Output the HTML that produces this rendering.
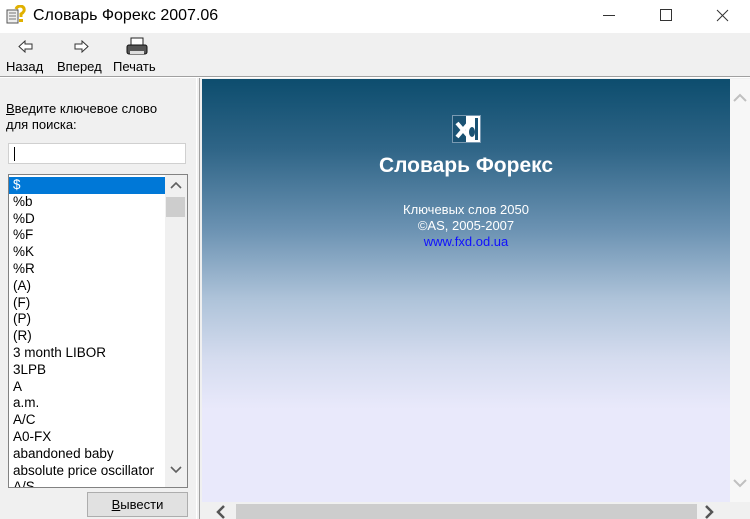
<!DOCTYPE html>
<html><head><meta charset="utf-8"><style>
*{margin:0;padding:0;box-sizing:border-box}
body{width:750px;height:519px;overflow:hidden;background:#f0f0f0;font-family:"Liberation Sans","DejaVu Sans",sans-serif;position:relative;font-size:13px;color:#000}
.abs{position:absolute}
#title{left:0;top:0;width:750px;height:33px;background:#fff}
#title .t{left:33px;top:7px;font-size:16px;color:#000}
.tb{font-size:13px;color:#000}
#list div{height:16.8px;line-height:16.8px;padding-left:4px;font-size:13.5px;white-space:nowrap}
#content{left:202px;top:79px;width:528px;height:423px;background:linear-gradient(#0d4d6e 0px,#2f6587 70px,#6b92b2 150px,#aec3d9 220px,#d5dcef 280px,#e9e9fb 330px,#e9e9fb 423px)}
</style></head><body>
<div id="title" class="abs">
<svg class="abs" style="left:6px;top:5px" width="20" height="20" viewBox="0 0 20 20"><rect x="1" y="5" width="11" height="13" fill="#eee" stroke="#555"/><path d="M3 8h7M3 11h7M3 14h7" stroke="#777"/><path d="M10 4 Q11 1 15 1 Q19 2 18 6 Q17 8 15 9 L15 12" stroke="#e0b000" stroke-width="3" fill="none"/><rect x="13" y="14" width="4" height="3" fill="#e0b000"/></svg>
<div class="abs t">Словарь Форекс 2007.06</div>
<svg class="abs" style="left:600px;top:0" width="150" height="33"><path d="M3 15.5h12" stroke="#333"/><rect x="60.5" y="9.5" width="11" height="11" fill="none" stroke="#333"/><path d="M117 10l11 11M128 10l-11 11" stroke="#333"/></svg>
</div>
<svg class="abs" style="left:18px;top:40px" width="16" height="13"><path d="M1 6.5L7 1V4H14V9H7V12Z" fill="#fff" stroke="#333"/></svg>
<svg class="abs" style="left:73px;top:40px" width="16" height="13"><path d="M15 6.5L9 1V4H2V9H9V12Z" fill="#fff" stroke="#333"/></svg>
<svg class="abs" style="left:126px;top:37px" width="22" height="20"><rect x="5" y="1" width="12" height="7" fill="#fff" stroke="#222"/><rect x="1" y="8" width="20" height="9" rx="2" fill="#555" stroke="#111"/><rect x="4" y="14" width="14" height="3" fill="#ddd"/></svg>
<div class="abs tb" style="left:6px;top:59px">Назад</div>
<div class="abs tb" style="left:57px;top:59px">Вперед</div>
<div class="abs tb" style="left:113px;top:59px">Печать</div>
<div class="abs" style="left:0;top:76px;width:750px;height:1px;background:#a0a0a0"></div>
<div class="abs" style="left:0;top:77px;width:750px;height:1px;background:#fff"></div>
<div class="abs" style="left:6px;top:101px;line-height:16px;font-size:13px"><u>В</u>ведите ключевое слово<br>для поиска:</div>
<div class="abs" style="left:8px;top:143px;width:178px;height:21px;background:#fff;border:1px solid #d0d0d0"><div class="abs" style="left:5px;top:3px;width:1px;height:14px;background:#000"></div></div>
<div class="abs" style="left:8px;top:174px;width:180px;height:314px;background:#fff;border:1px solid #828282;overflow:hidden">
<div id="list" class="abs" style="left:0;top:2px;width:156px">
<div style="background:#0078d7;color:#fff">$</div><div>%b</div><div>%D</div><div>%F</div><div>%K</div><div>%R</div><div>(A)</div><div>(F)</div><div>(P)</div><div>(R)</div><div>3 month LIBOR</div><div>3LPB</div><div>A</div><div>a.m.</div><div>A/C</div><div>A0-FX</div><div>abandoned baby</div><div>absolute price oscillator</div><div>A/S</div>
</div>
<div class="abs" style="left:156px;top:0;width:22px;height:312px;background:#f0f0f0"></div>
<div class="abs" style="left:157px;top:22px;width:19px;height:20px;background:#cdcdcd"></div>
<svg class="abs" style="left:160px;top:6px" width="14" height="10"><path d="M2 7l5-5 5 5" stroke="#606060" stroke-width="1.6" fill="none"/></svg>
<svg class="abs" style="left:160px;top:290px" width="14" height="10"><path d="M2 2l5 5 5-5" stroke="#606060" stroke-width="1.6" fill="none"/></svg>
</div>
<div class="abs" style="left:87px;top:492px;width:101px;height:25px;background:#e1e1e1;border:1px solid #adadad;text-align:center;line-height:23px;font-size:13px"><u>В</u>ывести</div>
<div class="abs" style="left:196px;top:78px;width:1px;height:441px;background:#fff"></div>
<div class="abs" style="left:199px;top:78px;width:1px;height:441px;background:#a0a0a0"></div>
<div id="content" class="abs">
<svg class="abs" style="left:250px;top:36px" width="30" height="29"><rect x="0.5" y="0.5" width="28" height="27" fill="#1a5273" stroke="#7a9ab2"/><rect x="14" y="1" width="14" height="26" fill="#fff"/><path d="M5 8l12 14M17 8L5 22" stroke="#fff" stroke-width="4"/><ellipse cx="20" cy="17" rx="3" ry="5" fill="#1a5273"/><rect x="23" y="3" width="3" height="22" fill="#1a5273"/><rect x="26" y="1" width="2" height="26" fill="#fff"/></svg>
<div class="abs" style="left:0;top:75px;width:528px;text-align:center;font:bold 21px 'Liberation Sans',sans-serif;color:#fff">Словарь Форекс</div>
<div class="abs" style="left:0;top:123px;width:528px;text-align:center;font-size:13px;color:#fff;line-height:16px">Ключевых слов 2050<br>©AS, 2005-2007<br><span style="color:#1010ff">www.fxd.od.ua</span></div>
</div>
<div class="abs" style="left:730px;top:79px;width:20px;height:423px;background:#f7f7f7"></div>
<svg class="abs" style="left:732px;top:92px" width="16" height="12"><path d="M2 9l6-6 6 6" stroke="#c0c0c0" stroke-width="2" fill="none"/></svg>
<svg class="abs" style="left:732px;top:477px" width="16" height="12"><path d="M2 3l6 6 6-6" stroke="#c0c0c0" stroke-width="2" fill="none"/></svg>
<div class="abs" style="left:202px;top:502px;width:548px;height:17px;background:#f0f0f0"></div>
<div class="abs" style="left:236px;top:504px;width:461px;height:15px;background:#cdcdcd"></div>
<svg class="abs" style="left:214px;top:504px" width="14" height="15"><path d="M10 2l-6 6 6 6" stroke="#555" stroke-width="2.5" fill="none"/></svg>
<svg class="abs" style="left:702px;top:504px" width="14" height="15"><path d="M4 2l6 6-6 6" stroke="#555" stroke-width="2.5" fill="none"/></svg>
</body></html>
